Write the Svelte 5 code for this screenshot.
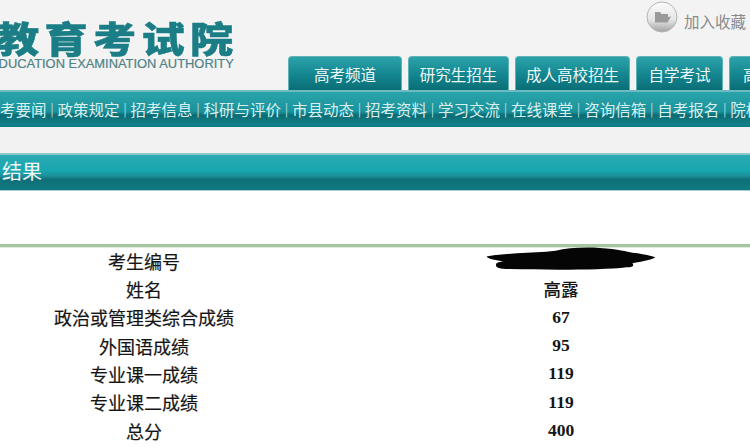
<script>
  const tabs = [
    { label: '高考频道', width: 114 },
    { label: '研究生招生', width: 101 },
    { label: '成人高校招生', width: 115 },
    { label: '自学考试', width: 87 },
    { label: '高等教育', width: 90 },
  ];
  const links = ['考要闻', '政策规定', '招考信息', '科研与评价', '市县动态', '招考资料', '学习交流', '在线课堂', '咨询信箱', '自考报名', '院校信息'];
  const rows = [
    ['考生编号', ''],
    ['姓名', '高露'],
    ['政治或管理类综合成绩', '67'],
    ['外国语成绩', '95'],
    ['专业课一成绩', '119'],
    ['专业课二成绩', '119'],
    ['总分', '400'],
  ];
</script>

<div class="page">
  <header class="top">
    <div class="logo">
      <div class="logo-cn">教育考试院</div>
      <div class="logo-en">EDUCATION EXAMINATION AUTHORITY</div>
    </div>
    <div class="top-right">
      <div class="fav">
        <svg class="fav-icon" width="32" height="32" viewBox="0 0 32 32">
          <defs>
            <linearGradient id="disc" x1="0" y1="0" x2="0" y2="1">
              <stop offset="0" stop-color="#fdfdfd" />
              <stop offset="0.6" stop-color="#e4e4e4" />
              <stop offset="1" stop-color="#a2a2a2" />
            </linearGradient>
          </defs>
          <circle cx="16" cy="16" r="15" fill="url(#disc)" stroke="#b5b5b5" stroke-width="1" />
          <path d="M9 11h5l1.500 2h6.500v3l3-.5-3.500 6H9z" fill="#9a9a9a" />
        </svg>
        <span>加入收藏</span>
      </div>
      <div class="tabs">
        {#each tabs as tab}
          <div class="tab" style="width:{tab.width}px">{tab.label}</div>
        {/each}
      </div>
    </div>
  </header>

  <nav class="nav">
    {#each links as link, i}
      {#if i > 0}<span class="sep">|</span>{/if}<span class="link">{link}</span>
    {/each}
  </nav>

  <div class="gap"></div>

  <div class="title-bar"><span>结果</span></div>

  <div class="blank"></div>

  <div class="rule"></div>

  <div class="table">
    {#each rows as [name, value]}
      <div class="cell name">{name}</div>
      <div class="cell value" class:cjk={value === '高露'}>
        {#if value}
          {value}
        {:else}
          <svg class="scribble" width="176" height="24" viewBox="0 0 176 25">
            <path d="M0 10 C14 7 40 6 62 5 L72 4 C84 1 100 0 118 1 C138 2 146 5 152 6 C162 7 172 9 176 11 C170 14 158 16 152 17 C154 20 152 21 146 21 C120 24 70 24 24 23 C12 23 9 21 10 18 C10 16 14 15 18 15 C10 14 2 13 0 10 Z" fill="#050505" />
          </svg>
        {/if}
      </div>
    {/each}
  </div>
</div>

<style>
  :global(body) { margin: 0; background: #fff; }
  .page {
    width: 750px; height: 447px; overflow: hidden; background: #fff;
    font-family: "Noto Sans CJK SC", "Liberation Sans", sans-serif;
  }
  .top { display: flex; height: 90px; background: #f3f3f3; }
  .logo { width: 288px; flex: none; padding-top: 17px; box-sizing: border-box; overflow: hidden; }
  .logo-cn {
    font-size: 36px; line-height: 40px; font-weight: 900; letter-spacing: 4.400px;
    color: #1b7d85; white-space: nowrap; margin-left: -4px;
    -webkit-text-stroke: 0.5px #1b7d85;
    transform: scaleX(1.2); transform-origin: left center;
    filter: drop-shadow(0 0 1px #fff);
  }
  .logo-en {
    font-family: "Liberation Sans", sans-serif; font-size: 12.900px; line-height: 14px;
    color: #4f8287; white-space: nowrap; margin-left: -10px;
    -webkit-text-stroke: 0.2px #4f8287;
  }
  .top-right { flex: 1; min-width: 0; display: flex; flex-direction: column; }
  .fav { height: 56px; display: flex; justify-content: flex-end; align-items: flex-start; gap: 6px; padding-right: 4px; color: #8a8a8a; font-size: 15.500px; }
  .fav span { line-height: 42px; }
  .fav-icon { margin-top: 1px; }
  .tabs { display: flex; gap: 6px; height: 34px; }
  .tab {
    flex: none; box-sizing: border-box; text-align: center; line-height: 34px; color: #eef8f8;
    font-size: 15.500px; border-radius: 4px 4px 0 0;
    border: 1px solid #5fb1b6; border-bottom: none;
    background: linear-gradient(#2ba3ab, #13858f 55%, #0a6e75);
  }
  .nav {
    display: flex; align-items: center; height: 37px; box-sizing: border-box; white-space: nowrap;
    border-top: 2px solid #6cbcc1; border-bottom: 2px solid #0f7d84;
    background: linear-gradient(#2aa4ab, #1a929b 60%, #0a6c74 70%, #15818a);
    color: #d9efef; font-size: 15.500px; overflow: hidden;
  }
  .link { flex: none; }
  .sep { flex: none; width: 11px; text-align: center; font-size: 13px; color: #b5dcdd; }
  .gap { height: 26px; background: #f2f2f2; }
  .title-bar {
    height: 38px; box-sizing: border-box; padding-left: 2px;
    border-top: 2px solid #8ac9c9; border-bottom: 1px solid #a7cfd2;
    background: linear-gradient(#2ba9b1, #18a6b0 45%, #1d8f9a 60%, #0f6f78 70%, #0f7a80);
    color: #eef8f8; font-size: 20px; line-height: 32px;
  }
  .blank { height: 53px; }
  .rule { height: 3px; background: #a4c6a0; border-bottom: 1px solid #e0ece0; }
  .table { display: grid; grid-template-columns: 288px 1fr; grid-auto-rows: 28.330px; margin-top: -1.500px; }
  .cell { display: flex; align-items: center; justify-content: center; color: #151515; font-size: 18px; }
  .name { font-weight: 400; -webkit-text-stroke: 0.2px #151515; }
  .value { padding-left: 84px; font-size: 17.500px; font-family: "Liberation Serif", "Noto Sans CJK SC", serif; font-weight: 700; position: relative; }
  .value.cjk { font-family: "Noto Sans CJK SC", sans-serif; font-weight: 500; }
  .scribble { position: absolute; left: 195px; top: 0; }
</style>
